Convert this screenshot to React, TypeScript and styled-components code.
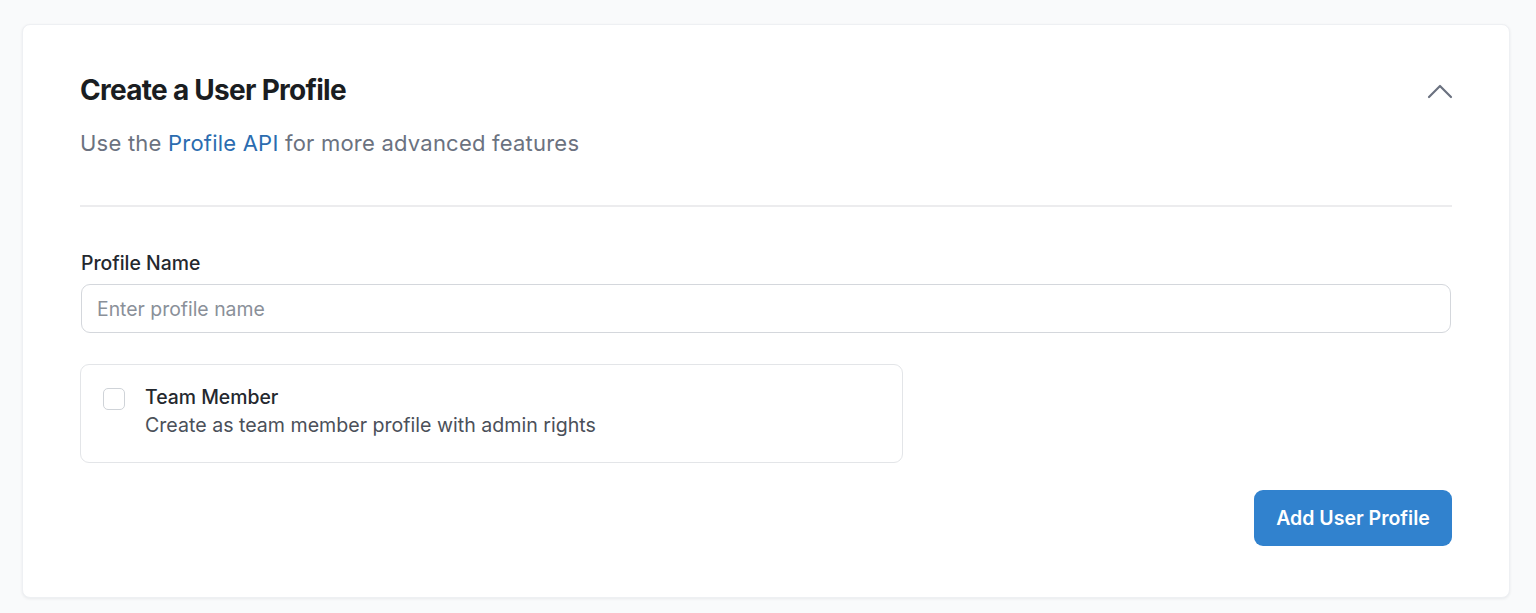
import React from "react";
import styled, { createGlobalStyle } from "styled-components";

const Global = createGlobalStyle`
  html, body { margin: 0; padding: 0; background: #f9fafb; }
  body { font-family: Inter, "Noto Sans", sans-serif; -webkit-font-smoothing: antialiased; }
  * { box-sizing: border-box; }
`;

const Page = styled.div`
  padding: 24px 26px 15px 22px;
  background: #f9fafb;
`;

const Card = styled.section`
  background: #ffffff;
  border: 1px solid #eef0f3;
  border-radius: 8px;
  box-shadow: 0 1px 3px rgba(15, 23, 42, 0.07);
  padding: 47px 57px 51px 57px;
  display: flex;
  flex-direction: column;
`;

const Header = styled.div`
  display: flex;
  justify-content: space-between;
  align-items: flex-start;
`;

const HeaderText = styled.div`
  display: flex;
  flex-direction: column;
  gap: 19px;
`;

const Title = styled.h2`
  margin: 0;
  font-size: 28px;
  line-height: 36px;
  font-weight: 700;
  letter-spacing: -0.72px;
  color: #1a1d21;
`;

const Subtitle = styled.p`
  margin: 0;
  font-size: 22px;
  line-height: 32px;
  letter-spacing: 0.22px;
  color: #6b7280;
`;

const Link = styled.a`
  color: #2b6cb0;
  text-decoration: none;
`;

const ToggleButton = styled.button`
  border: none;
  background: transparent;
  padding: 0;
  margin-top: 7px;
  margin-right: -1px;
  width: 26px;
  height: 24px;
  display: flex;
  align-items: center;
  justify-content: flex-end;
  color: #6b7280;
  cursor: pointer;
`;

const Divider = styled.hr`
  border: none;
  border-top: 2px solid #ececee;
  margin: 46px 0 42px;
`;

const Field = styled.div`
  display: flex;
  flex-direction: column;
  gap: 7px;
`;

const Label = styled.label`
  font-size: 19.4px;
  line-height: 28px;
  font-weight: 500;
  color: #24282e;
  padding-left: 1px;
`;

const Input = styled.input`
  height: 49px;
  margin: 0 1px;
  border: 1.5px solid #d4d7dc;
  border-radius: 9px;
  padding: 0 15px;
  font-family: inherit;
  font-size: 19.4px;
  color: #1f2329;
  outline: none;
  &::placeholder { color: #8a9099; }
`;

const OptionCard = styled.label`
  margin-top: 31px;
  width: 823px;
  border: 1.5px solid #e3e5e8;
  border-radius: 9px;
  padding: 18px 22px 23px;
  display: flex;
  gap: 20px;
  align-items: flex-start;
  cursor: pointer;
`;

const Box = styled.span`
  margin-top: 5px;
  width: 22px;
  height: 22px;
  border: 1.5px solid #cfd3d8;
  border-radius: 5px;
  background: #fff;
  flex-shrink: 0;
`;

const OptionText = styled.div`
  display: flex;
  flex-direction: column;
`;

const OptionTitle = styled.span`
  font-size: 19.4px;
  line-height: 28px;
  font-weight: 500;
  color: #24282e;
`;

const OptionDesc = styled.span`
  font-size: 19.6px;
  line-height: 28px;
  color: #4b5059;
`;

const Actions = styled.div`
  margin-top: 27px;
  display: flex;
  justify-content: flex-end;
`;

const Primary = styled.button`
  height: 56px;
  width: 198px;
  border: none;
  border-radius: 9px;
  background: #3182ce;
  color: #ffffff;
  font-family: inherit;
  font-size: 19.5px;
  font-weight: 600;
  cursor: pointer;
`;

export default function App() {
  return (
    <>
      <Global />
      <Page>
        <Card>
          <Header>
            <HeaderText>
              <Title>Create a User Profile</Title>
              <Subtitle>
                Use the <Link href="#">Profile API</Link> for more advanced features
              </Subtitle>
            </HeaderText>
            <ToggleButton aria-label="Collapse">
              <svg width="26" height="16" viewBox="0 0 26 16" fill="none">
                <path d="M2 14 L13 3 L24 14" stroke="currentColor" strokeWidth="2.2" strokeLinecap="round" strokeLinejoin="round" />
              </svg>
            </ToggleButton>
          </Header>
          <Divider />
          <Field>
            <Label htmlFor="pname">Profile Name</Label>
            <Input id="pname" placeholder="Enter profile name" />
          </Field>
          <OptionCard>
            <Box />
            <OptionText>
              <OptionTitle>Team Member</OptionTitle>
              <OptionDesc>Create as team member profile with admin rights</OptionDesc>
            </OptionText>
          </OptionCard>
          <Actions>
            <Primary>Add User Profile</Primary>
          </Actions>
        </Card>
      </Page>
    </>
  );
}
